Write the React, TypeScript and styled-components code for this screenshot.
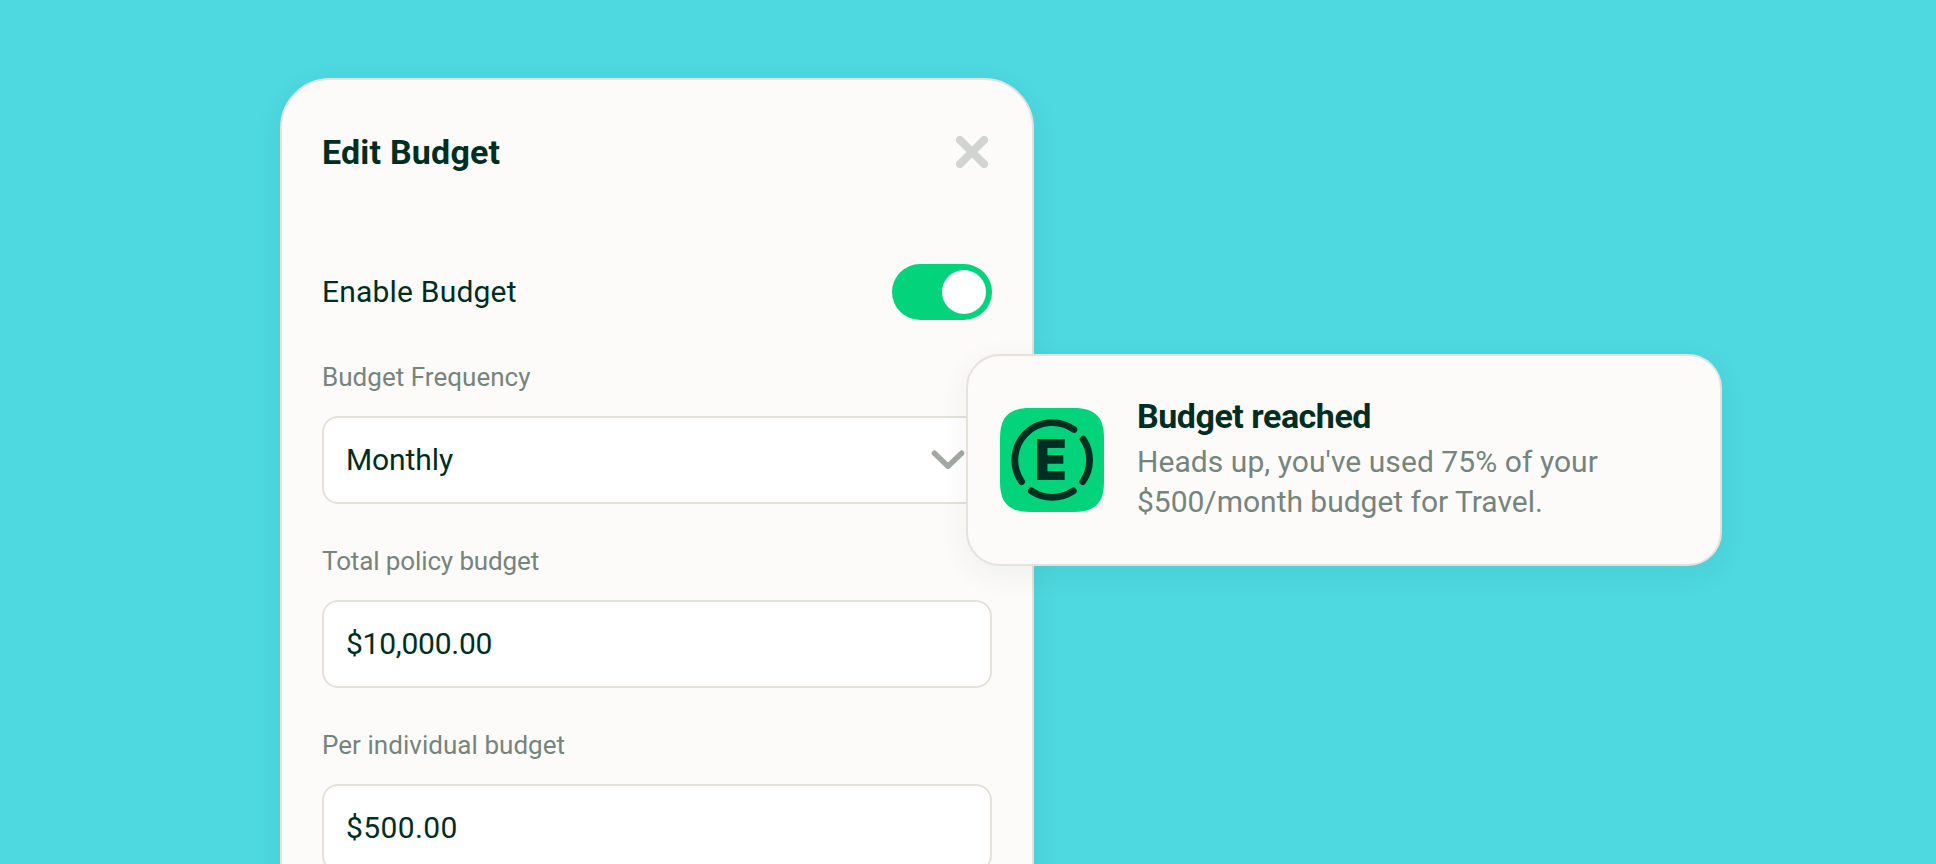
import React, { ReactElement, useState } from 'react';
import styled, { createGlobalStyle } from 'styled-components';

const colors = {
  background: '#4ed8e0',
  surface: '#fcfbf9',
  border: '#e6e1da',
  text: '#002e22',
  muted: '#76847e',
  icon: '#a2a9a3',
  iconLight: '#d1d4d0',
  green: '#03d47c',
};

export default function App(): ReactElement {
  const [enabled, setEnabled] = useState(true);

  return (
    <>
      <GlobalStyle />
      <Page>
        <Panel>
          <Header>
            <Title $spacing={0.2}>Edit Budget</Title>
            <CloseButton aria-label="Close">
              <svg width="32" height="32" viewBox="0 0 32 32" fill="none">
                <path d="M4 4L28 28M28 4L4 28" stroke={colors.iconLight} strokeWidth="8" strokeLinecap="round" />
              </svg>
            </CloseButton>
          </Header>
          <ToggleRow>
            <ToggleLabel>Enable Budget</ToggleLabel>
            <Switch role="switch" aria-checked={enabled} $on={enabled} onClick={() => setEnabled(!enabled)}>
              <Knob />
            </Switch>
          </ToggleRow>
          <Field>
            <Label $spacing={0.03}>Budget Frequency</Label>
            <InputBox>
              <Value $spacing={-0.1}>Monthly</Value>
              <svg width="34" height="20" viewBox="0 0 34 20" fill="none">
                <path
                  d="M3.4 3.2L17 16.2L30.6 3.2"
                  stroke={colors.icon}
                  strokeWidth="5.4"
                  strokeLinecap="round"
                  strokeLinejoin="round"
                />
              </svg>
            </InputBox>
          </Field>
          <Field>
            <Label $spacing={-0.12}>Total policy budget</Label>
            <InputBox>
              <Value $spacing={-0.25}>$10,000.00</Value>
            </InputBox>
          </Field>
          <Field>
            <Label $spacing={0.04}>Per individual budget</Label>
            <InputBox>
              <Value $spacing={0.38}>$500.00</Value>
            </InputBox>
          </Field>
        </Panel>

        <Toast>
          <AppLogo />
          <ToastBody>
            <Title $spacing={-0.47}>Budget reached</Title>
            <ToastLine $spacing={0.06}>Heads up, you've used 75% of your</ToastLine>
            <ToastLine $spacing={-0.02}>$500/month budget for Travel.</ToastLine>
          </ToastBody>
        </Toast>
      </Page>
    </>
  );
}

function AppLogo(): ReactElement {
  return (
    <LogoSvg viewBox="0 0 104 104">
      <path
        d="M0 30C0 9 9 0 30 0H74C95 0 104 9 104 30V74C104 95 95 104 74 104H30C9 104 0 95 0 74Z"
        fill={colors.green}
      />
      <g fill="none" stroke={colors.text} strokeWidth="6.8" strokeLinecap="round">
        <path d="M21.6 73.6A37.5 37.5 0 0 1 74 21.5" />
        <path d="M83.2 31.2A37.5 37.5 0 0 1 82.8 73.6" />
        <path d="M31.3 82.9A37.5 37.5 0 0 0 73.3 82.9" />
      </g>
      <text
        transform="translate(34.6 72.4) scale(0.93 1)"
        fontFamily="Inter, sans-serif"
        fontWeight="900"
        fontSize="57"
        fill={colors.text}
      >
        E
      </text>
    </LogoSvg>
  );
}

const GlobalStyle = createGlobalStyle`
  * {
    box-sizing: border-box;
  }
  body {
    margin: 0;
    background: ${colors.background};
    font-family: Roboto, sans-serif;
    color: ${colors.text};
  }
`;

const Page = styled.main`
  position: relative;
  height: 864px;
  padding: 78px 0 0 280px;
  overflow: hidden;
`;

const Panel = styled.section`
  width: 754px;
  height: 860px;
  padding: 52px 40px 0;
  background: ${colors.surface};
  border: 2px solid ${colors.border};
  border-radius: 50px;
  box-shadow: 0 8px 32px rgba(0, 46, 34, 0.06);
`;

const Header = styled.header`
  display: flex;
  align-items: center;
  justify-content: space-between;
  height: 40px;
`;

const Title = styled.h2<{ $spacing: number }>`
  margin: 0;
  font-size: 34px;
  font-weight: 700;
  line-height: 40px;
  letter-spacing: ${({ $spacing }) => $spacing}px;
  white-space: nowrap;
`;

const CloseButton = styled.button`
  display: flex;
  margin-right: 4px;
  padding: 0;
  border: none;
  background: none;
  cursor: pointer;
`;

const ToggleRow = styled.div`
  display: flex;
  align-items: center;
  justify-content: space-between;
  margin-top: 92px;
`;

const ToggleLabel = styled.span`
  font-size: 30px;
  line-height: 40px;
  letter-spacing: 0.2px;
`;

const Switch = styled.button<{ $on: boolean }>`
  display: flex;
  align-items: center;
  justify-content: ${({ $on }) => ($on ? 'flex-end' : 'flex-start')};
  width: 100px;
  height: 56px;
  padding: 6px;
  border: none;
  border-radius: 28px;
  background: ${({ $on }) => ($on ? colors.green : colors.icon)};
  cursor: pointer;
`;

const Knob = styled.span`
  width: 44px;
  height: 44px;
  border-radius: 50%;
  background: #fff;
`;

const Field = styled.div`
  display: flex;
  flex-direction: column;
  gap: 22px;
  margin-top: 40px;
`;

const Label = styled.label<{ $spacing: number }>`
  font-size: 26px;
  line-height: 34px;
  letter-spacing: ${({ $spacing }) => $spacing}px;
  color: ${colors.muted};
`;

const InputBox = styled.div`
  display: flex;
  align-items: center;
  justify-content: space-between;
  height: 88px;
  padding: 0 25px 0 22px;
  background: #fff;
  border: 2px solid ${colors.border};
  border-radius: 16px;
`;

const Value = styled.span<{ $spacing: number }>`
  font-size: 30px;
  line-height: 40px;
  letter-spacing: ${({ $spacing }) => $spacing}px;
`;

// sits over the right edge of the panel
const Toast = styled.aside`
  position: absolute;
  top: 354px;
  left: 966px;
  display: flex;
  align-items: center;
  gap: 33px;
  width: 756px;
  height: 212px;
  padding: 0 32px;
  background: ${colors.surface};
  border: 2px solid ${colors.border};
  border-radius: 34px;
  box-shadow: 0 8px 32px rgba(0, 46, 34, 0.06);
`;

const LogoSvg = styled.svg`
  flex: none;
  width: 104px;
  height: 104px;
`;

const ToastBody = styled.div`
  display: flex;
  flex-direction: column;
  padding-bottom: 2px;

  h2 {
    margin-bottom: 6px;
  }
`;

const ToastLine = styled.p<{ $spacing: number }>`
  margin: 0;
  font-size: 30px;
  line-height: 40px;
  letter-spacing: ${({ $spacing }) => $spacing}px;
  color: ${colors.muted};
  white-space: nowrap;
`;
